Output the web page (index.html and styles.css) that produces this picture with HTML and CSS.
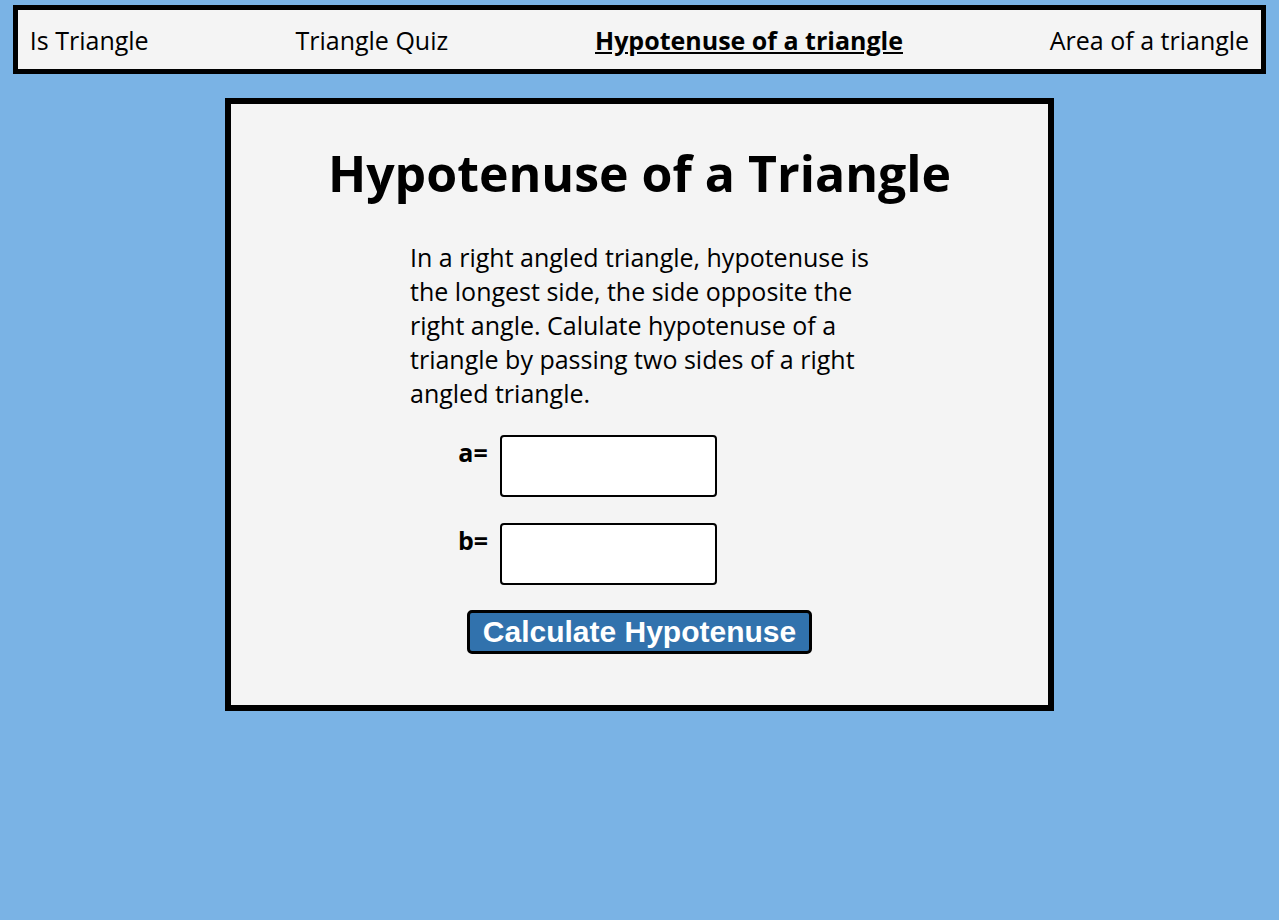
FILE: index.html
```html
<!DOCTYPE html>
<html lang="en">
<head>
<meta charset="utf-8">
<title>Hypotenuse of a Triangle</title>
<link rel="stylesheet" href="styles.css">
</head>
<body>
<nav class="nav">
  <a class="nav-link" href="#">Is Triangle</a>
  <a class="nav-link" href="#">Triangle Quiz</a>
  <a class="nav-link active" href="#">Hypotenuse of a triangle</a>
  <a class="nav-link" href="#">Area of a triangle</a>
</nav>
<main class="card">
  <h1 class="title">Hypotenuse of a Triangle</h1>
  <p class="desc">In a right angled triangle, hypotenuse is the longest side, the side opposite the right angle. Calulate hypotenuse of a triangle by passing two sides of a right angled triangle.</p>
  <form class="form">
    <div class="row">
      <label class="label" for="a">a=</label>
      <input class="input" id="a" type="number">
    </div>
    <div class="row">
      <label class="label" for="b">b=</label>
      <input class="input" id="b" type="number">
    </div>
    <button class="btn" type="button">Calculate Hypotenuse</button>
  </form>
</main>
</body>
</html>
```
FILE: styles.css
```css
html, body {
  margin: 0;
  padding: 0;
}
body {
  background: #7ab3e5;
  font-family: "Open Sans", "Liberation Sans", sans-serif;
  color: #000;
  min-height: 920px;
}
.nav {
  width: 98%;
  margin: 5px auto 0;
  box-sizing: border-box;
  border: 5px solid #000;
  background: #f4f4f4;
  height: 69px;
  display: flex;
  justify-content: space-between;
  align-items: center;
  padding: 0 12px;
}
.nav-link {
  color: #000;
  text-decoration: none;
  font-size: 25px;
}
.nav-link.active {
  font-weight: 700;
  text-decoration: underline;
}
.card {
  box-sizing: border-box;
  width: 829px;
  height: 613px;
  margin: 24px auto 0;
  border: 6px solid #000;
  background: #f4f4f4;
  padding-top: 34px;
}
.title {
  margin: 0;
  text-align: center;
  font-size: 50px;
  font-weight: 700;
  line-height: 70px;
}
.desc {
  width: 459px;
  margin: 32px auto 0;
  font-size: 25px;
  line-height: 34px;
}
.form {
  display: flex;
  flex-direction: column;
  align-items: center;
  margin-top: 25px;
}
.row {
  display: flex;
  align-items: flex-start;
  justify-content: center;
  gap: 12px;
  align-self: stretch;
  padding-right: 104px;
  margin-bottom: 26px;
}
.label {
  font-size: 25px;
  font-weight: 700;
  line-height: 34px;
}
.input {
  box-sizing: border-box;
  width: 217px;
  height: 62px;
  border: 2px solid #000;
  border-radius: 4px;
  background: #fff;
}
.btn {
  box-sizing: border-box;
  width: 345px;
  height: 44px;
  margin-top: -1px;
  padding: 0;
  border: 3px solid #000;
  border-radius: 5px;
  background: #3172ad;
  color: #fff;
  font-family: "Liberation Sans", Arial, sans-serif;
  font-weight: 700;
  font-size: 30px;
  line-height: 38px;
}
```
